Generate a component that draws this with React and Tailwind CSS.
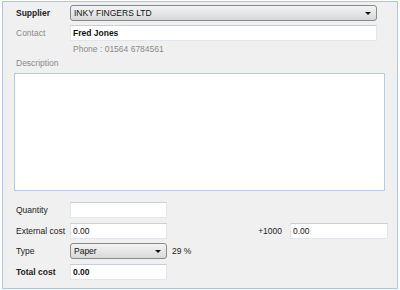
function Select({ value, className }) {
  return (
    <div
      className={`flex items-center justify-between h-[16px] rounded-[3px] border border-[#8a8a8a] bg-gradient-to-b from-[#f4f4f4] to-[#d9d9d9] pl-[3px] pr-[5px] ${className}`}
    >
      <span className="text-[8.5px] leading-none text-[#111]">{value}</span>
      <span className="w-0 h-0 border-l-[3px] border-r-[3px] border-t-[3px] border-l-transparent border-r-transparent border-t-[#111]" />
    </div>
  )
}

function Field({ value, bold, className }) {
  return (
    <div
      className={`flex items-center h-[16px] bg-white border border-[#e1e6ec] border-t-[#c9cfd6] pl-[2px] ${className}`}
    >
      <span className={`text-[8.5px] leading-none text-[#111] ${bold ? 'font-bold' : ''}`}>{value}</span>
    </div>
  )
}

function Label({ children, muted, bold }) {
  return (
    <span
      className={`w-[54px] shrink-0 text-[8.5px] leading-none ${muted ? 'text-[#8a8a8a]' : 'text-[#222]'} ${bold ? 'font-bold' : ''}`}
    >
      {children}
    </span>
  )
}

export default function App() {
  return (
    <div className="w-[400px] h-[290px] bg-white pt-[1px] pl-[2px] font-['Liberation_Sans',Arial,sans-serif]">
      <div className="w-[396px] h-[288px] border border-[#a6c6e6] bg-[#f0f0f0] flex flex-col">
        <div className="mt-[3px] pl-[13px] flex items-center">
          <Label bold>Supplier</Label>
          <Select value="INKY FINGERS LTD" className="w-[307px]" />
        </div>
        <div className="mt-[4px] pl-[13px] flex items-center">
          <Label muted>Contact</Label>
          <Field value="Fred Jones" bold className="w-[307px]" />
        </div>
        <div className="mt-[2px] h-[12px] pl-[70px] flex items-center">
          <span className="text-[8.5px] leading-none text-[#8a8a8a]">Phone : 01564 6784561</span>
        </div>
        <div className="mt-[2px] h-[12px] pl-[13px] flex items-center">
          <span className="text-[8.5px] leading-none text-[#8a8a8a]">Description</span>
        </div>
        <div className="mt-[4px] pl-[11px]">
          <div className="w-[371px] h-[118px] bg-white border border-[#b4cde6]" />
        </div>
        <div className="mt-[11px] pl-[13px] flex items-center">
          <Label>Quantity</Label>
          <Field value="" className="w-[97px]" />
        </div>
        <div className="mt-[5px] pl-[13px] flex items-center">
          <Label>External cost</Label>
          <Field value="0.00" className="w-[97px]" />
          <span className="ml-auto mr-[8px] text-[8.5px] leading-none text-[#222]">+1000</span>
          <Field value="0.00" className="w-[98px] mr-[9px]" />
        </div>
        <div className="mt-[4px] pl-[13px] flex items-center">
          <Label>Type</Label>
          <Select value="Paper" className="w-[97px]" />
          <span className="ml-[5px] text-[8.5px] leading-none text-[#222]">29 %</span>
        </div>
        <div className="mt-[5px] pl-[13px] flex items-center">
          <Label bold>Total cost</Label>
          <Field value="0.00" bold className="w-[97px]" />
        </div>
      </div>
    </div>
  )
}
